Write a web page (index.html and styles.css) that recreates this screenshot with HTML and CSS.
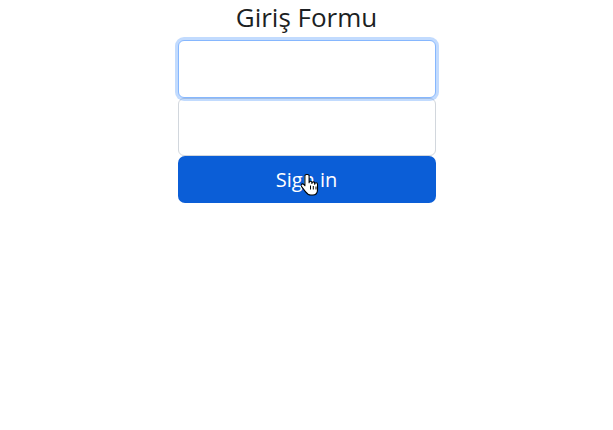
FILE: index.html
```html
<!DOCTYPE html>
<html lang="tr">
<head>
<meta charset="utf-8">
<title>Giriş Formu</title>
<link rel="stylesheet" href="styles.css">
</head>
<body>
<main class="form-signin">
  <form class="form">
    <h1 class="title">Giriş Formu</h1>
    <input class="field field-focus" type="email" aria-label="Email">
    <input class="field" type="password" aria-label="Password">
    <button class="btn" type="button">Sign in
      <svg class="cursor" width="18" height="24" viewBox="0 0 18 24" aria-hidden="true">
        <path d="M5.5 1.5c-1 0-1.6.7-1.6 1.6v9.6l-1.2-1.3c-.7-.7-1.7-.7-2.3 0-.5.5-.5 1.4 0 2l4 5.2c1.2 1.6 2.6 3.4 5.3 3.4h2c3 0 4.8-2.3 4.8-5.3v-5.4c0-.9-.6-1.5-1.4-1.5-.8 0-1.4.6-1.4 1.5v-.9c0-.9-.6-1.5-1.4-1.5-.8 0-1.4.6-1.4 1.5v-.7c0-.9-.6-1.5-1.4-1.5-.8 0-1.4.6-1.4 1.5V3.1c0-.9-.6-1.6-1.6-1.6z" fill="#fff" stroke="#000" stroke-width="1.1" stroke-linejoin="round"/>
        <path d="M9.5 12.5v4M12.3 13v3.5M15 13.5v3" stroke="#000" stroke-width="1" fill="none"/>
      </svg>
    </button>
  </form>
</main>
</body>
</html>
```
FILE: styles.css
```css
html, body {
  margin: 0;
  padding: 0;
  background: #fff;
}
body {
  font-family: "Open Sans", "Noto Sans", sans-serif;
  color: #212529;
}
.form-signin {
  display: flex;
  justify-content: center;
}
.form {
  width: 258px;
  display: flex;
  flex-direction: column;
}
.title {
  margin: 0 0 4.6px;
  font-size: 26px;
  font-weight: 500;
  line-height: 35.4px;
  text-align: center;
  color: #1c1f23;
}
.field {
  box-sizing: border-box;
  display: block;
  width: 100%;
  height: 58px;
  margin: 0;
  padding: 0 12px;
  border: 1px solid #d2d7dd;
  border-radius: 6px;
  background: #fff;
  font: inherit;
  outline: none;
}
.field-focus {
  border-color: #86b7fe;
  box-shadow: 0 0 0 3px rgba(13, 110, 253, 0.25);
  position: relative;
  z-index: 1;
}
.btn {
  position: relative;
  box-sizing: border-box;
  height: 47px;
  width: 100%;
  margin: 0;
  border: 0;
  border-radius: 7px;
  background: #0b5ed7;
  color: #fff;
  font-family: "Open Sans", "Noto Sans", sans-serif;
  font-size: 20px;
  line-height: 47px;
  padding: 0;
}
.cursor {
  position: absolute;
  left: 123px;
  top: 17px;
}
```
